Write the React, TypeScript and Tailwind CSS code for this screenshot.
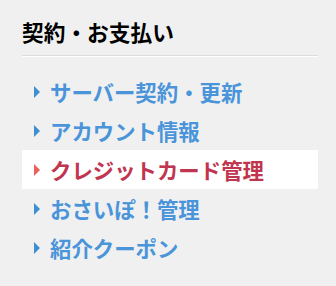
import React from "react";

const items = [
  { label: "サーバー契約・更新", active: false },
  { label: "アカウント情報", active: false },
  { label: "クレジットカード管理", active: true },
  { label: "おさいぽ！管理", active: false },
  { label: "紹介クーポン", active: false },
];

function Tri({ color }: { color: string }) {
  return (
    <svg width="6" height="12" viewBox="0 0 6 12" className="shrink-0">
      <polygon points="0,0 6,6 0,12" fill={color} />
    </svg>
  );
}

export default function App() {
  return (
    <div
      className="w-[336px] h-[286px] bg-[#f0f0f0] pl-[22px] pr-[18px] pt-[17px]"
      style={{ fontFamily: '"Noto Sans CJK JP", "Noto Sans", sans-serif' }}
    >
      <div className="border-b border-[#dcdcdc] shadow-[0_1px_0_#ffffff] pb-[8px]">
        <h2 className="h-[30px] leading-[30px] text-[21.7px] font-bold text-black">
          契約・お支払い
        </h2>
      </div>
      <ul className="mt-[16px]">
        {items.map((it) => (
          <li
            key={it.label}
            className={
              "h-[39px] flex items-center pl-[12px] gap-[10px] " +
              (it.active ? "bg-white" : "")
            }
          >
            <Tri color={it.active ? "#eb5f5c" : "#3d8fd1"} />
            <span
              className={
                "text-[21.4px] font-bold leading-none " +
                (it.active ? "text-[#c0354f]" : "text-[#4a94da]")
              }
            >
              {it.label}
            </span>
          </li>
        ))}
      </ul>
    </div>
  );
}
